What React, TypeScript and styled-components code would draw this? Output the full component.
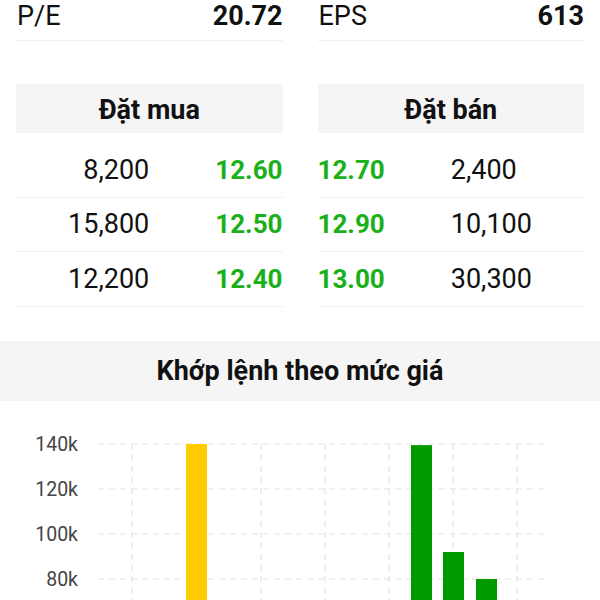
import React from "react"
import styled, { createGlobalStyle } from "styled-components"

const GlobalStyle = createGlobalStyle`
    body {
        margin: 0;
        background: #fff;
        font-family: Roboto, "Liberation Sans", sans-serif;
        color: #111;
    }
`

const stats = [
    { label: "P/E", value: "20.72" },
    { label: "EPS", value: "613" },
]

const buyOrders = [
    { vol: "8,200", price: "12.60" },
    { vol: "15,800", price: "12.50" },
    { vol: "12,200", price: "12.40" },
]

const sellOrders = [
    { vol: "2,400", price: "12.70" },
    { vol: "10,100", price: "12.90" },
    { vol: "30,300", price: "13.00" },
]

const yTicks = ["140k", "120k", "100k", "80k", "60k", "40k", "20k", "0"]
const xLines = [132, 196, 261, 325, 389, 453, 517]

// chart origin: page y 401
const step = 45
const top = 43
const pxPerK = step / 20
const bars = [
    { x: 186, k: 140, color: "#ffcc00" },
    { x: 411, k: 139.5, color: "#009a00" },
    { x: 443, k: 92, color: "#009a00" },
    { x: 476, k: 80, color: "#009a00" },
]

export default function App() {
    const baseY = top + step * 7
    return (
        <>
            <GlobalStyle />
            <Page>
                <Columns>
                    {stats.map((s) => (
                        <StatRow key={s.label}>
                            <StatLabel>{s.label}</StatLabel>
                            <StatValue>{s.value}</StatValue>
                        </StatRow>
                    ))}
                </Columns>

                <Book>
                    <Side>
                        <SideHeader>Đặt mua</SideHeader>
                        {buyOrders.map((o) => (
                            <OrderRow key={o.price}>
                                <Cell $align="right">{o.vol}</Cell>
                                <Price $align="right">{o.price}</Price>
                            </OrderRow>
                        ))}
                    </Side>
                    <Side>
                        <SideHeader>Đặt bán</SideHeader>
                        {sellOrders.map((o) => (
                            <OrderRow key={o.price}>
                                <Price $align="left">{o.price}</Price>
                                <Cell $align="left">{o.vol}</Cell>
                            </OrderRow>
                        ))}
                    </Side>
                </Book>
            </Page>

            <SectionTitle>Khớp lệnh theo mức giá</SectionTitle>

            <Chart width="600" height="400" viewBox="0 0 600 400">
                {yTicks.map((t, i) => (
                    <g key={t}>
                        <line x1="98" x2="547" y1={top + i * step} y2={top + i * step}
                            stroke="#e3e3e3" strokeWidth="1.2" strokeDasharray="6 5" />
                        <text x="78" y={top + i * step} textAnchor="end" dominantBaseline="central"
                            fontSize="19.5" fill="#444" fontFamily="Roboto, sans-serif">{t}</text>
                    </g>
                ))}
                {xLines.map((x) => (
                    <line key={x} x1={x} x2={x} y1={top} y2={baseY}
                        stroke="#e3e3e3" strokeWidth="1.2" strokeDasharray="6 5" />
                ))}
                {bars.map((b) => (
                    <rect key={b.x} x={b.x} width="21" y={baseY - b.k * pxPerK} height={b.k * pxPerK} fill={b.color} />
                ))}
            </Chart>
        </>
    )
}

const Page = styled.div`
    padding: 0 16px;
`

const Columns = styled.div`
    display: grid;
    grid-template-columns: 1fr 1fr;
    column-gap: 35px;
`

const StatRow = styled.div`
    display: flex;
    justify-content: space-between;
    align-items: center;
    height: 31px;
    padding-bottom: 9px;
    border-bottom: 1px solid #f0f0f0;
    font-size: 27px;
`

const StatLabel = styled.span`
    font-weight: 400;
    padding-left: 1px;
`

const StatValue = styled.span`
    font-weight: 700;
`

const Book = styled(Columns)`
    margin-top: 43px;
`

const Side = styled.div`
    display: flex;
    flex-direction: column;
`

const SideHeader = styled.div`
    height: 49px;
    padding-top: 3px;
    box-sizing: border-box;
    margin-bottom: 10px;
    background: #f5f5f5;
    display: flex;
    align-items: center;
    justify-content: center;
    font-size: 27px;
    font-weight: 700;
`

const OrderRow = styled.div`
    display: grid;
    grid-template-columns: 1fr 1fr;
    align-items: center;
    height: 53.5px;
    border-bottom: 1px solid #f0f0f0;
    font-size: 27px;
`

const Cell = styled.span<{ $align: "left" | "right" }>`
    text-align: ${(p) => p.$align};
    font-weight: 400;
`

const Price = styled(Cell)`
    font-size: 26px;
    font-weight: 700;
    color: #19b019;
`

const SectionTitle = styled.div`
    margin-top: 34px;
    height: 60px;
    background: #f5f5f5;
    display: flex;
    align-items: center;
    justify-content: center;
    font-size: 27px;
    font-weight: 700;
`

const Chart = styled.svg`
    display: block;
`
